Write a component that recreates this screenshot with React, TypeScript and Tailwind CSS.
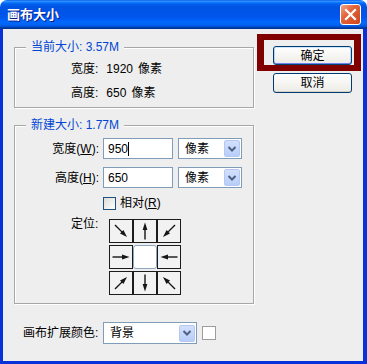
import React from 'react';

const FONT = "font-['Liberation_Sans','Noto_Sans_CJK_SC',sans-serif]";

function Arrow({ deg }: { deg: number }) {
  return (
    <svg width="22" height="22" viewBox="0 0 22 22">
      <g transform={`rotate(${deg} 11 11)`}>
        <line x1="2.5" y1="11" x2="14" y2="11" stroke="#151515" strokeWidth="1.4" />
        <polygon points="19.5,11 12,8.6 12,13.4" fill="#151515" />
      </g>
    </svg>
  );
}

function Cell({ deg }: { deg: number }) {
  return (
    <div className="w-[24px] h-[24px] border border-[#1b1b1b] bg-[#f2f2f2] flex items-center justify-center">
      <Arrow deg={deg} />
    </div>
  );
}

function Chevron() {
  return (
    <div className="w-[16px] h-[17px] rounded-[2px] border border-[#b5c8f3] bg-[linear-gradient(to_bottom,#d3e0fd,#b8cdf8)] flex items-center justify-center">
      <svg width="10" height="8" viewBox="0 0 10 8">
        <polyline points="1.5,2 5,5.5 8.5,2" fill="none" stroke="#4d6185" strokeWidth="2" />
      </svg>
    </div>
  );
}

export default function App() {
  return (
    <div className={`w-[367px] h-[364px] flex flex-col ${FONT} text-[12px] text-black`}>
      {/* Title bar */}
      <div className="h-[29px] shrink-0 rounded-t-[7px] bg-[linear-gradient(to_bottom,#0058ee_0%,#3593ff_4%,#288eff_6%,#127dff_8%,#036ffc_10%,#0262ee_14%,#0057e5_20%,#0054e3_24%,#0055eb_56%,#005bf5_66%,#026afe_76%,#0062ef_86%,#0052d6_92%,#0040ab_94%,#003092_100%)] flex items-center pl-[7px] pr-[6px]">
        <span className="text-white font-bold text-[13px] leading-[14px] [text-shadow:1px_1px_0_#0a1882]">画布大小</span>
        <div className="ml-auto w-[21px] h-[21px] rounded-[3px] border border-white bg-[linear-gradient(135deg,#f0a58a_0%,#e2643b_40%,#cc4418_100%)] flex items-center justify-center">
          <svg width="13" height="13" viewBox="0 0 13 13">
            <path d="M2 2 L11 11 M11 2 L2 11" stroke="#ffffff" strokeWidth="2.2" strokeLinecap="square" />
          </svg>
        </div>
      </div>

      {/* Client */}
      <div className="flex-1 flex bg-[#eeeeee] border-l-[3px] border-r-[4px] border-b-[3px] border-[#0831d9]">
        {/* Left column */}
        <div className="w-[251px] shrink-0 pl-[11px] pt-[11px] flex flex-col">
          <fieldset className="w-[240px] h-[68px] border border-[#a7a7a7] shadow-[inset_1px_1px_0_#ffffff,1px_1px_0_#ffffff]">
            <legend className="ml-[11px] px-[5px] leading-[14px] bg-[#eeeeee] text-[#0046d5]">当前大小: 3.57M</legend>
            <div className="pl-[56px] pt-[3px] flex flex-col">
              <div className="leading-[24px] flex">
                <span>宽度:</span>
                <span className="ml-[8px]">1920</span>
                <span className="ml-[5px]">像素</span>
              </div>
              <div className="leading-[24px] flex">
                <span>高度:</span>
                <span className="ml-[8px]">650</span>
                <span className="ml-[5px]">像素</span>
              </div>
            </div>
          </fieldset>

          <fieldset className="mt-[10px] w-[240px] h-[186px] border border-[#a7a7a7] shadow-[inset_1px_1px_0_#ffffff,1px_1px_0_#ffffff]">
            <legend className="ml-[11px] px-[5px] leading-[14px] bg-[#eeeeee] text-[#0046d5]">新建大小: 1.77M</legend>
            <div className="pt-[6px] flex flex-col">
              <div className="flex items-center h-[21px]">
                <span className="w-[84px] text-right">宽度(<span className="underline">W</span>):</span>
                <div className="ml-[4px] w-[70px] h-[21px] border border-[#7f9db9] bg-white flex items-center pl-[4px]">
                  <span>950</span>
                  <span className="w-px h-[14px] bg-black" />
                </div>
                <div className="ml-[5px] w-[64px] h-[21px] border border-[#7f9db9] bg-white flex items-center justify-between pl-[6px] pr-px">
                  <span>像素</span>
                  <Chevron />
                </div>
              </div>
              <div className="mt-[8px] flex items-center h-[21px]">
                <span className="w-[84px] text-right">高度(<span className="underline">H</span>):</span>
                <div className="ml-[4px] w-[70px] h-[21px] border border-[#7f9db9] bg-white flex items-center pl-[4px]">
                  <span>650</span>
                </div>
                <div className="ml-[5px] w-[64px] h-[21px] border border-[#7f9db9] bg-white flex items-center justify-between pl-[6px] pr-px">
                  <span>像素</span>
                  <Chevron />
                </div>
              </div>
              <div className="mt-[9px] pl-[88px] flex items-center h-[13px]">
                <div className="w-[13px] h-[13px] border border-[#1c5180] bg-[linear-gradient(135deg,#dcdcd7,#ffffff)]" />
                <span className="ml-[4px] leading-[13px]">相对(<span className="underline">R</span>)</span>
              </div>
              <div className="mt-[9px] pl-[56px] flex items-start">
                <span className="w-[38px] leading-[12px] -mt-px">定位:</span>
                <div className="flex flex-col gap-[2px]">
                  <div className="flex">
                    <Cell deg={45} />
                    <Cell deg={-90} />
                    <Cell deg={135} />
                  </div>
                  <div className="flex">
                    <Cell deg={0} />
                    <div className="w-[24px] h-[24px] rounded-[3px] border border-[#8ca6c4] bg-white" />
                    <Cell deg={180} />
                  </div>
                  <div className="flex">
                    <Cell deg={-45} />
                    <Cell deg={90} />
                    <Cell deg={-135} />
                  </div>
                </div>
              </div>
            </div>
          </fieldset>

          <div className="mt-[18px] pl-[9px] flex items-center">
            <span className="w-[80px]">画布扩展颜色:</span>
            <div className="w-[94px] h-[22px] border border-[#7f9db9] bg-white flex items-center justify-between pl-[6px] pr-px">
              <span>背景</span>
              <Chevron />
            </div>
            <div className="ml-[5px] w-[14px] h-[14px] border border-[#9c9c9c] bg-white" />
          </div>
        </div>

        {/* Right column */}
        <div className="ml-[3px] pt-[5px] flex flex-col">
          <div className="w-[104px] border-[7px] border-t-[6px] border-b-[6px] border-[#800000] pt-[6px] pl-[9px]">
            <div className="w-[79px] h-[19px] rounded-[3px] border border-[#003c74] bg-[linear-gradient(to_bottom,#ffffff,#ecebe6)] shadow-[inset_0_1px_0_#cee7ff,inset_0_-1px_0_#6982ee,inset_1px_0_0_#b8d2fb,inset_-1px_0_0_#b8d2fb] flex items-center justify-center leading-[14px]">
              确定
            </div>
          </div>
          <div className="mt-[2px] ml-[16px] w-[79px] h-[20px] rounded-[3px] border border-[#003c74] bg-[linear-gradient(to_bottom,#ffffff,#ecebe6)] shadow-[inset_0_-1px_0_#d6d0c5] flex items-center justify-center leading-[14px]">
            取消
          </div>
        </div>
      </div>
    </div>
  );
}
